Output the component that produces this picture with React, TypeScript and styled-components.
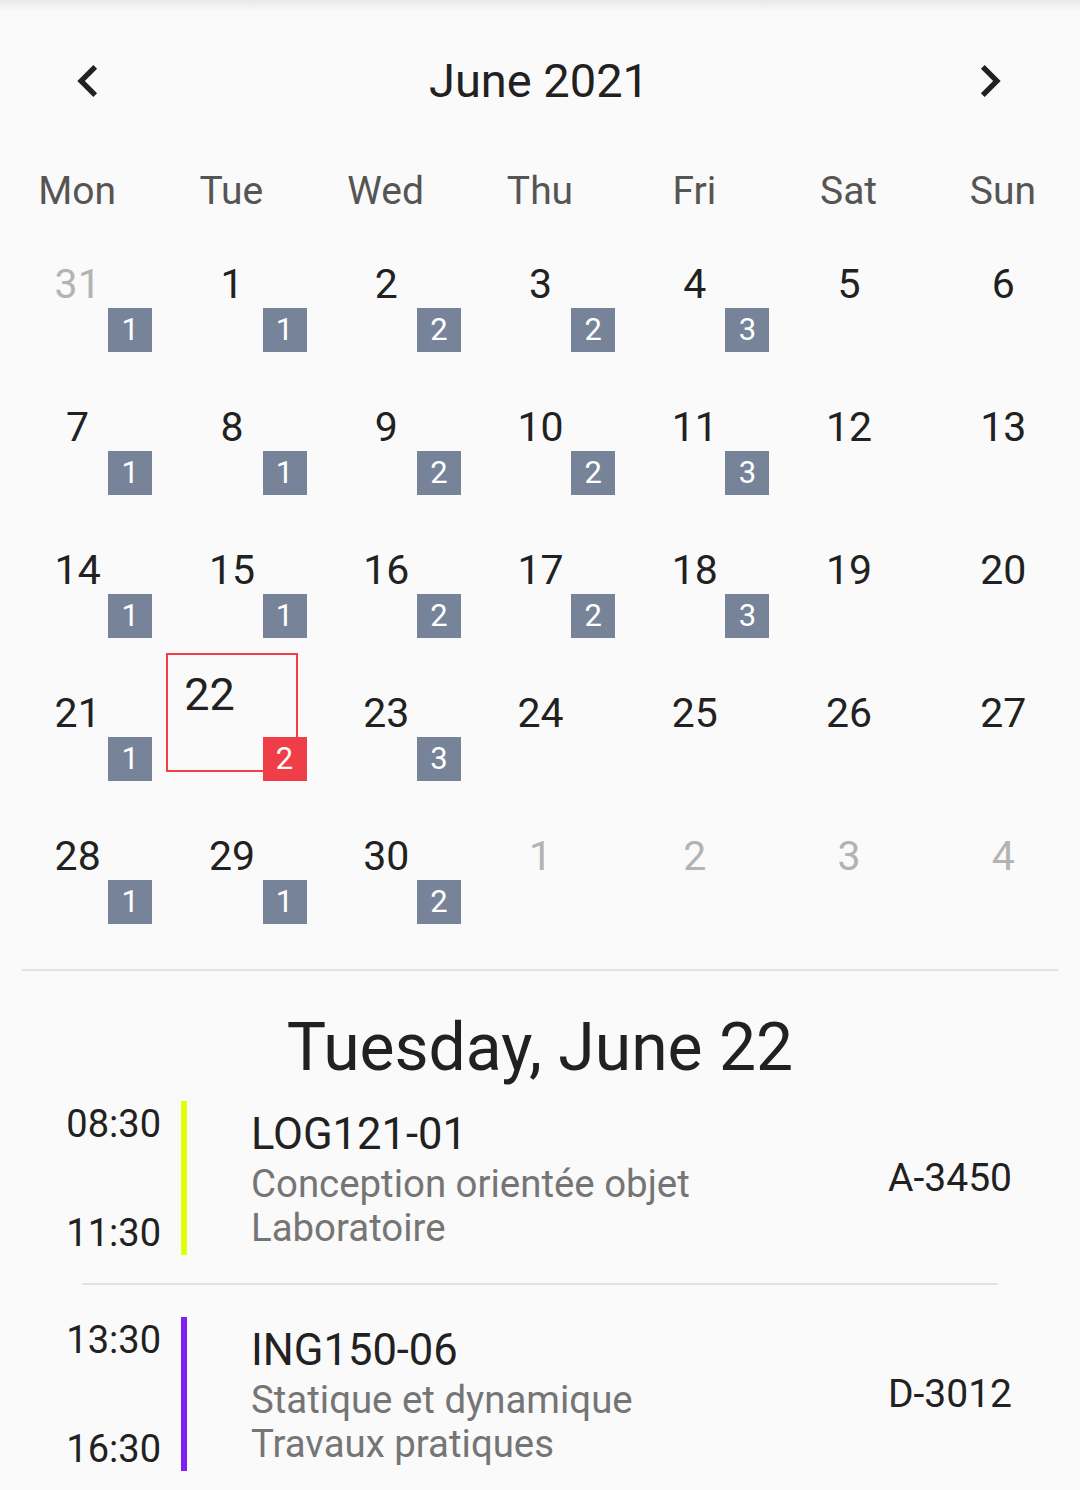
import React from "react";
import styled, { createGlobalStyle } from "styled-components";

const Global = createGlobalStyle`
  html, body { margin: 0; padding: 0; background: #fafafa; }
  body { font-family: Roboto, "Noto Sans", "Liberation Sans", sans-serif; color: #212121; }
  * { box-sizing: border-box; }
`;

const Page = styled.div`
  width: 1080px;
  min-height: 1490px;
  background: linear-gradient(to bottom, rgba(0, 0, 0, 0.07), rgba(0, 0, 0, 0) 12px) no-repeat, #fafafa;
  overflow: hidden;
`;

const Header = styled.header`
  height: 160px;
  display: flex;
  align-items: center;
  justify-content: space-between;
  padding: 2px 58px 0 56px;
`;

const NavButton = styled.button`
  width: 64px;
  height: 64px;
  padding: 0;
  border: none;
  background: transparent;
  color: #212121;
  display: flex;
  align-items: center;
  justify-content: center;
  cursor: pointer;
  svg { display: block; }
`;

const Title = styled.h1`
  margin: 0;
  font-size: 47px;
  font-weight: 400;
  line-height: 56px;
  color: #212121;
`;

const WeekRow = styled.div`
  height: 51px;
  padding-top: 10px;
  display: grid;
  grid-template-columns: repeat(7, 1fr);
`;

const WeekLabel = styled.div`
  text-align: center;
  font-size: 39px;
  line-height: 42px;
  color: #555555;
`;

const Grid = styled.div`
  display: grid;
  grid-template-columns: repeat(7, 1fr);
  grid-auto-rows: 143px;
`;

const Cell = styled.div`
  position: relative;
  padding: 13px 11px 11px 12px;
`;

const Frame = styled.div<{ $selected?: boolean }>`
  height: 100%;
  border: 2px solid ${(p) => (p.$selected ? "#ef4048" : "transparent")};
  display: flex;
  flex-direction: column;
  align-items: ${(p) => (p.$selected ? "flex-start" : "center")};
  padding-left: ${(p) => (p.$selected ? "16px" : "0")};
`;

const DayNum = styled.div<{ $muted?: boolean; $selected?: boolean }>`
  font-size: ${(p) => (p.$selected ? "45px" : "41px")};
  line-height: ${(p) => (p.$selected ? "52px" : "48px")};
  margin-top: ${(p) => (p.$selected ? "14px" : "34px")};
  color: ${(p) => (p.$muted ? "#b3b3b3" : "#212121")};
`;

const Badge = styled.div<{ $selected?: boolean }>`
  position: absolute;
  right: 2px;
  bottom: 2px;
  width: 44px;
  height: 44px;
  background: ${(p) => (p.$selected ? "#ef3e47" : "#778399")};
  color: #ffffff;
  font-size: 31px;
  line-height: 44px;
  text-align: center;
`;

const Divider = styled.div`
  height: 2px;
  margin: 43px 22px 0;
  background: #e2e2e2;
`;

const DayHeading = styled.h2`
  margin: 37px 0 0;
  text-align: center;
  font-size: 66px;
  line-height: 80px;
  font-weight: 400;
  color: #212121;
`;

const EventList = styled.div`
  margin-top: 13px;
`;

const EventRow = styled.div`
  display: flex;
  align-items: stretch;
  height: 154px;
  padding-right: 68px;
`;

const Times = styled.div`
  width: 161px;
  display: flex;
  flex-direction: column;
  justify-content: space-between;
  align-items: flex-end;
  padding-top: 1px;
  font-size: 38px;
  line-height: 44px;
  color: #212121;
`;

const Bar = styled.div<{ $color: string }>`
  width: 6px;
  margin-left: 20px;
  background: ${(p) => p.$color};
`;

const Details = styled.div`
  flex: 1;
  margin-left: 64px;
  padding-top: 10px;
`;

const Code = styled.div`
  font-size: 43.5px;
  line-height: 48px;
  color: #212121;
`;

const Sub = styled.div`
  font-size: 38.4px;
  line-height: 44px;
  color: #757575;
  &:nth-child(2) { margin-top: 3px; }
`;

const Room = styled.div`
  align-self: center;
  font-size: 39px;
  line-height: 46px;
  color: #212121;
`;

const Separator = styled.div`
  height: 2px;
  margin: 28px 82px 32px;
  background: #e2e2e2;
`;

const ChevronLeft = () => (
  <svg width="64" height="64" viewBox="0 0 24 24" fill="currentColor">
    <path d="M15.41 7.41L14 6l-6 6 6 6 1.41-1.41L10.83 12z" />
  </svg>
);

const ChevronRight = () => (
  <svg width="64" height="64" viewBox="0 0 24 24" fill="currentColor">
    <path d="M10 6L8.59 7.41 13.17 12l-4.58 4.59L10 18l6-6z" />
  </svg>
);

type Day = { n: number; count?: number; muted?: boolean; selected?: boolean };

const weeks: Day[][] = [
  [{ n: 31, count: 1, muted: true }, { n: 1, count: 1 }, { n: 2, count: 2 }, { n: 3, count: 2 }, { n: 4, count: 3 }, { n: 5 }, { n: 6 }],
  [{ n: 7, count: 1 }, { n: 8, count: 1 }, { n: 9, count: 2 }, { n: 10, count: 2 }, { n: 11, count: 3 }, { n: 12 }, { n: 13 }],
  [{ n: 14, count: 1 }, { n: 15, count: 1 }, { n: 16, count: 2 }, { n: 17, count: 2 }, { n: 18, count: 3 }, { n: 19 }, { n: 20 }],
  [{ n: 21, count: 1 }, { n: 22, count: 2, selected: true }, { n: 23, count: 3 }, { n: 24 }, { n: 25 }, { n: 26 }, { n: 27 }],
  [{ n: 28, count: 1 }, { n: 29, count: 1 }, { n: 30, count: 2 }, { n: 1, muted: true }, { n: 2, muted: true }, { n: 3, muted: true }, { n: 4, muted: true }],
];

const weekdays = ["Mon", "Tue", "Wed", "Thu", "Fri", "Sat", "Sun"];

const events = [
  { start: "08:30", end: "11:30", color: "#e0ff0c", code: "LOG121-01", title: "Conception orientée objet", kind: "Laboratoire", room: "A-3450" },
  { start: "13:30", end: "16:30", color: "#801ff0", code: "ING150-06", title: "Statique et dynamique", kind: "Travaux pratiques", room: "D-3012" },
];

export default function App() {
  return (
    <Page>
      <Global />
      <Header>
        <NavButton aria-label="Previous month"><ChevronLeft /></NavButton>
        <Title>June 2021</Title>
        <NavButton aria-label="Next month"><ChevronRight /></NavButton>
      </Header>
      <WeekRow>
        {weekdays.map((d) => (
          <WeekLabel key={d}>{d}</WeekLabel>
        ))}
      </WeekRow>
      <Grid>
        {weeks.flat().map((d, i) => (
          <Cell key={i}>
            <Frame $selected={d.selected}>
              <DayNum $muted={d.muted} $selected={d.selected}>{d.n}</DayNum>
            </Frame>
            {d.count ? <Badge $selected={d.selected}>{d.count}</Badge> : null}
          </Cell>
        ))}
      </Grid>
      <Divider />
      <DayHeading>Tuesday, June 22</DayHeading>
      <EventList>
        {events.map((e, i) => (
          <React.Fragment key={e.code}>
            {i > 0 && <Separator />}
            <EventRow>
              <Times>
                <span>{e.start}</span>
                <span>{e.end}</span>
              </Times>
              <Bar $color={e.color} />
              <Details>
                <Code>{e.code}</Code>
                <Sub>{e.title}</Sub>
                <Sub>{e.kind}</Sub>
              </Details>
              <Room>{e.room}</Room>
            </EventRow>
          </React.Fragment>
        ))}
      </EventList>
    </Page>
  );
}
